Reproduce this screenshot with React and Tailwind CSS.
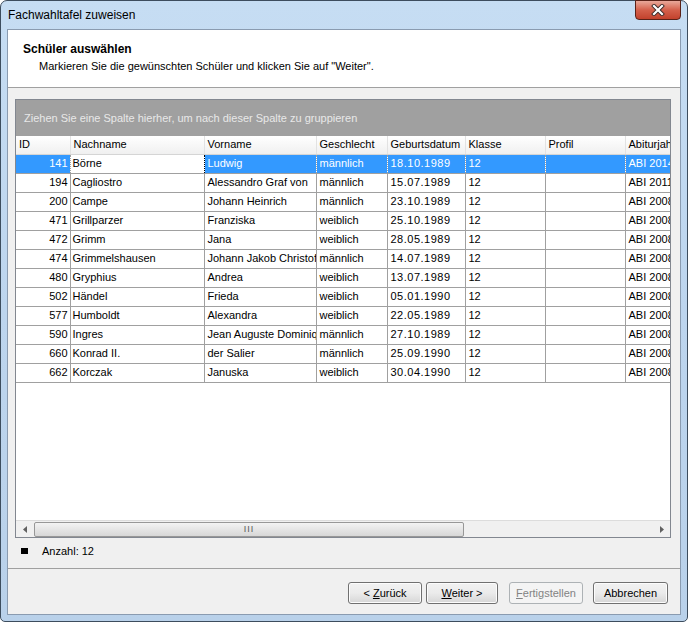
import React from 'react';

const rows = [
  { id: 141, nach: 'Börne', vor: 'Ludwig', ges: 'männlich', geb: '18.10.1989', kl: '12', abi: 'ABI 2014' },
  { id: 194, nach: 'Cagliostro', vor: 'Alessandro Graf von', ges: 'männlich', geb: '15.07.1989', kl: '12', abi: 'ABI 2011' },
  { id: 200, nach: 'Campe', vor: 'Johann Heinrich', ges: 'männlich', geb: '23.10.1989', kl: '12', abi: 'ABI 2008' },
  { id: 471, nach: 'Grillparzer', vor: 'Franziska', ges: 'weiblich', geb: '25.10.1989', kl: '12', abi: 'ABI 2008' },
  { id: 472, nach: 'Grimm', vor: 'Jana', ges: 'weiblich', geb: '28.05.1989', kl: '12', abi: 'ABI 2008' },
  { id: 474, nach: 'Grimmelshausen', vor: 'Johann Jakob Christof', ges: 'männlich', geb: '14.07.1989', kl: '12', abi: 'ABI 2008' },
  { id: 480, nach: 'Gryphius', vor: 'Andrea', ges: 'weiblich', geb: '13.07.1989', kl: '12', abi: 'ABI 2008' },
  { id: 502, nach: 'Händel', vor: 'Frieda', ges: 'weiblich', geb: '05.01.1990', kl: '12', abi: 'ABI 2008' },
  { id: 577, nach: 'Humboldt', vor: 'Alexandra', ges: 'weiblich', geb: '22.05.1989', kl: '12', abi: 'ABI 2008' },
  { id: 590, nach: 'Ingres', vor: 'Jean Auguste Dominique', ges: 'männlich', geb: '27.10.1989', kl: '12', abi: 'ABI 2008' },
  { id: 660, nach: 'Konrad II.', vor: 'der Salier', ges: 'männlich', geb: '25.09.1990', kl: '12', abi: 'ABI 2008' },
  { id: 662, nach: 'Korczak', vor: 'Januska', ges: 'weiblich', geb: '30.04.1990', kl: '12', abi: 'ABI 2008' },
];

const cols = [
  { label: 'ID', w: 'w-[54px]' },
  { label: 'Nachname', w: 'w-[134px]' },
  { label: 'Vorname', w: 'w-[112px]' },
  { label: 'Geschlecht', w: 'w-[71px]' },
  { label: 'Geburtsdatum', w: 'w-[78px]' },
  { label: 'Klasse', w: 'w-[80px]' },
  { label: 'Profil', w: 'w-[80px]' },
  { label: 'Abiturjahr', w: 'w-[80px]' },
];

function Button({ children, disabled, w }) {
  return (
    <button
      type="button"
      className={
        disabled
          ? `${w} h-[22px] rounded-[3px] border border-[#adb2b5] bg-[#f4f4f4] text-[#838383] text-[11px]`
          : `${w} h-[22px] rounded-[3px] border border-[#707070] bg-gradient-to-b from-[#f2f2f2] via-[#ebebeb] to-[#d6d6d6] text-black text-[11px] shadow-[inset_0_0_0_1px_#fcfcfc]`
      }
    >
      {children}
    </button>
  );
}

export default function App() {
  return (
    <div className="w-[688px] h-[622px] font-['Liberation_Sans',Arial,sans-serif] text-[11px] text-black">
      {/* Fensterrahmen */}
      <div className="w-full h-full rounded-t-[7px] rounded-b-[5px] border border-[#3d4d5e] bg-gradient-to-b from-[#c6ddf3] via-[#bdd5ee] to-[#b9d1ea] flex flex-col relative">
        <div className="h-[28px] flex items-center pl-[7px] text-[12px] text-black">Fachwahltafel zuweisen</div>

        <div className="absolute top-[-1px] right-[6px] w-[46px] h-[20px] rounded-b-[4px] border border-[#5a2218] bg-gradient-to-b from-[#e8a89a] via-[#d4604b] to-[#c2412c] flex items-center justify-center">
          <svg width="14" height="12" viewBox="0 0 14 12">
            <path d="M3 2 L11 10 M11 2 L3 10" stroke="#3a2a28" strokeWidth="4" strokeLinecap="square" />
            <path d="M3 2 L11 10 M11 2 L3 10" stroke="#ffffff" strokeWidth="2.2" strokeLinecap="square" />
          </svg>
        </div>

        {/* Inhalt */}
        <div className="flex-1 mx-[6px] mb-[6px] border border-[#8a9bb0] bg-[#f0f0f0] flex flex-col">
          <div className="h-[58px] bg-white border-b border-[#a0a0a0] pt-[12px] pl-[15px]">
            <div className="font-bold text-[12px] leading-[15px]">Schüler auswählen</div>
            <div className="pl-[16px] mt-[2px] leading-[15px]">Markieren Sie die gewünschten Schüler und klicken Sie auf "Weiter".</div>
          </div>

          <div className="flex-1 flex flex-col px-[7px] pt-[11px]">
            {/* Grid */}
            <div className="w-[656px] h-[439px] border border-[#828790] bg-white flex flex-col">
              <div className="h-[36px] bg-[#a0a0a0] flex items-center pl-[8px] text-[#e8e8e8]">
                Ziehen Sie eine Spalte hierher, um nach dieser Spalte zu gruppieren
              </div>
              <div className="flex-1 overflow-hidden">
                <table className="table-fixed border-collapse w-[689px]">
                  <thead>
                    <tr className="h-[18px] bg-gradient-to-b from-white to-[#f0f0f0]">
                      {cols.map((c) => (
                        <th
                          key={c.label}
                          className={`${c.w} font-normal text-left pl-[3px] border-r border-[#e2e2e2] border-b border-b-[#d5d5d5] whitespace-nowrap overflow-hidden leading-[17px]`}
                        >
                          {c.label}
                        </th>
                      ))}
                    </tr>
                  </thead>
                  <tbody>
                    {rows.map((r, i) => {
                      const sel = i === 0;
                      const cell = sel
                        ? 'bg-[#3399ff] text-white border-r border-[#a0a0a0] border-y border-y-[#d98c4a] border-dotted'
                        : 'border border-[#a0a0a0] border-l-0';
                      return (
                        <tr key={r.id} className="h-[19px] leading-[17px]">
                          <td className={`${cell} text-right pr-[2px] whitespace-nowrap overflow-hidden`}>{r.id}</td>
                          <td
                            className={
                              sel
                                ? 'bg-white text-black border border-dotted border-black pl-[2px] whitespace-nowrap overflow-hidden'
                                : `${cell} pl-[2px] whitespace-nowrap overflow-hidden`
                            }
                          >
                            {r.nach}
                          </td>
                          <td className={`${cell} pl-[3px] whitespace-nowrap overflow-hidden`}>{r.vor}</td>
                          <td className={`${cell} pl-[3px] whitespace-nowrap overflow-hidden`}>{r.ges}</td>
                          <td className={`${cell} pl-[3px] whitespace-nowrap overflow-hidden tracking-[0.5px]`}>{r.geb}</td>
                          <td className={`${cell} pl-[3px] whitespace-nowrap overflow-hidden`}>{r.kl}</td>
                          <td className={`${cell} pl-[3px] whitespace-nowrap overflow-hidden`}></td>
                          <td className={`${cell} pl-[3px] whitespace-nowrap overflow-hidden`}>{r.abi}</td>
                        </tr>
                      );
                    })}
                  </tbody>
                </table>
              </div>

              {/* Horizontale Scrollleiste */}
              <div className="h-[17px] bg-[#f0f0f0] border-t border-[#dcdcdc] flex items-center">
                <div className="w-[17px] flex justify-center">
                  <svg width="4" height="7" viewBox="0 0 4 7"><path d="M4 0 L0 3.5 L4 7 Z" fill="#606060" /></svg>
                </div>
                <div className="w-[430px] h-[15px] ml-[1px] rounded-[2px] border border-[#979797] bg-gradient-to-b from-[#f3f3f3] to-[#d7d7d7] flex items-center justify-center">
                  <span className="text-[9px] leading-none tracking-[1px] text-[#555]">III</span>
                </div>
                <div className="flex-1"></div>
                <div className="w-[17px] flex justify-center">
                  <svg width="4" height="7" viewBox="0 0 4 7"><path d="M0 0 L4 3.5 L0 7 Z" fill="#606060" /></svg>
                </div>
              </div>
            </div>

            <div className="flex items-center h-[26px] pl-[6px]">
              <div className="w-[7px] h-[6px] bg-black"></div>
              <span className="ml-[14px]">Anzahl: 12</span>
            </div>
          </div>

          <div className="h-[46px] border-t border-[#a0a0a0] flex items-start justify-end pt-[13px] pr-[12px]">
            <div className="flex gap-[4px]">
              <Button w="w-[74px]">
                &lt; <span className="underline">Z</span>urück
              </Button>
              <Button w="w-[72px]">
                <span className="underline">W</span>eiter &gt;
              </Button>
            </div>
            <div className="ml-[11px]">
              <Button w="w-[74px]" disabled>
                <span className="underline">F</span>ertigstellen
              </Button>
            </div>
            <div className="ml-[10px]">
              <Button w="w-[75px]">Abbrechen</Button>
            </div>
          </div>
        </div>
      </div>
    </div>
  );
}
